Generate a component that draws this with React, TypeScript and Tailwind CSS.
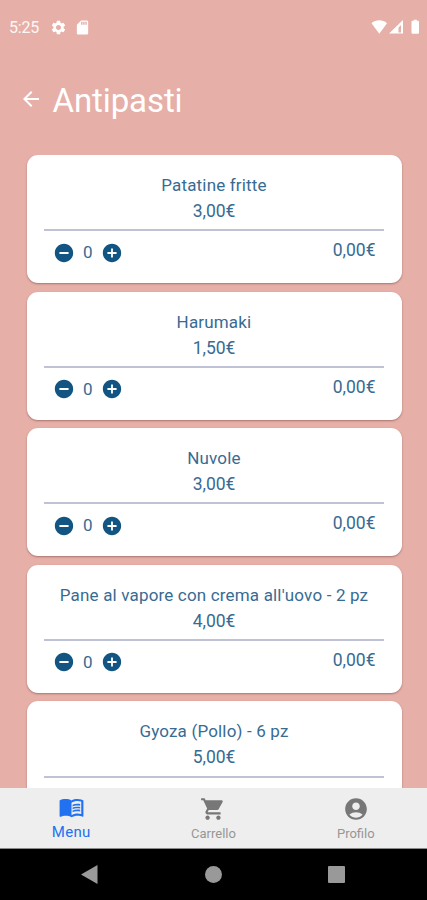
import {
  MdAccountCircle,
  MdAddCircle,
  MdArrowBack,
  MdMenuBook,
  MdRemoveCircle,
  MdSdCard,
  MdSettings,
  MdShoppingCart,
} from "react-icons/md";

interface Dish {
  name: string;
  price: string;
}

const dishes: Dish[] = [
  { name: "Patatine fritte", price: "3,00€" },
  { name: "Harumaki", price: "1,50€" },
  { name: "Nuvole", price: "3,00€" },
  { name: "Pane al vapore con crema all'uovo - 2 pz", price: "4,00€" },
  { name: "Gyoza (Pollo) - 6 pz", price: "5,00€" },
];

const StatusBar = () => {
  return (
    <div className="flex h-[54px] shrink-0 items-center justify-between pr-[7px] pl-[9px] text-white">
      <div className="flex items-center">
        <span className="w-[30px] pt-[2px] text-[16px] tracking-[-0.2px] text-white/90">
          5:25
        </span>
        <MdSettings size={17} className="ml-[11px]" />
        <MdSdCard size={17} className="ml-[7px]" />
      </div>
      <svg width="50" height="16" viewBox="0 0 50 16" fill="currentColor">
        <path d="M1.5 4.2C6 .4 12.5 .4 17 4.2L9.3 14.8z" />
        <path
          d="M19 14.5L33 1v13.5zM28.5 13.5h2.5V6L28.5 8.5z"
          fillRule="evenodd"
        />
        <path d="M42.5 1.8h1.2V.8h3.2v1h1.1q1 0 1 1v10.9q0 1-1 1h-5.5q-1 0-1-1V2.8q0-1 1-1z" />
      </svg>
    </div>
  );
};

const DishCard = ({ name, price }: Dish) => {
  return (
    <div className="h-[128.3px] shrink-0 rounded-[11px] bg-white px-[17.5px] pt-[17px] text-[17px] text-[#386b92] shadow-[0_1px_2px_rgba(90,50,45,0.45)]">
      <div className="text-center leading-[26px]">
        <div className="tracking-[0.17px] whitespace-nowrap">{name}</div>
        <div className="text-[17.5px] tracking-[-0.1px]">{price}</div>
      </div>
      <div className="mt-[5.2px] h-[2px] bg-[#bfc2d5]" />
      <div className="flex justify-between pr-[8.5px] pl-[9px]">
        <div className="flex h-[43px] items-center">
          <MdRemoveCircle size={22} className="-mx-[0.5px] text-[#125582]" />
          <span className="w-[27.5px] text-center">0</span>
          <MdAddCircle size={22} className="-mx-[0.5px] text-[#125582]" />
        </div>
        <span className="pt-[6px] text-[17.5px] leading-[26px]">0,00€</span>
      </div>
    </div>
  );
};

const TabBar = () => {
  return (
    <div className="grid h-[61px] shrink-0 grid-cols-3 border-b border-[#8a8a8a] bg-[#eeeeee] pt-[7px] text-[13px] text-[#969696]">
      <div className="flex flex-col items-center text-[#2271f0]">
        <MdMenuBook size={26} className="translate-x-[0.5px] -translate-y-px" />
        <span className="text-[15px] leading-[22px] tracking-[0.3px]">
          Menu
        </span>
      </div>
      <div className="flex flex-col items-center">
        <MdShoppingCart size={26} className="translate-y-px text-[#777777]" />
        <span className="leading-[25px]">Carrello</span>
      </div>
      <div className="flex flex-col items-center">
        <MdAccountCircle size={26} className="translate-y-px text-[#777777]" />
        <span className="leading-[25px]">Profilo</span>
      </div>
    </div>
  );
};

const SystemNav = () => {
  return (
    <div className="flex h-[51px] shrink-0 items-center justify-between bg-black pr-[82px] pl-[81px]">
      <svg width="17" height="19" viewBox="0 0 17 19" fill="#999999">
        <path d="M0 9.5L16.5 0v19z" />
      </svg>
      <div className="size-[17px] rounded-full bg-[#999999]" />
      <div className="size-[17px] rounded-[1px] bg-[#999999]" />
    </div>
  );
};

const App = () => {
  return (
    <div className="flex h-[900px] w-[427px] flex-col overflow-hidden bg-[#e6afa7] font-[Roboto,sans-serif]">
      <StatusBar />
      <header className="flex h-[101px] shrink-0 items-start pt-[27px] pl-[19px] text-white">
        <MdArrowBack size={24} className="mt-[5.5px]" />
        <h1 className="ml-[9.5px] text-[33px] leading-[40px] tracking-[-0.1px]">
          Antipasti
        </h1>
      </header>
      <main className="flex min-h-0 flex-1 flex-col gap-[8.3px] overflow-hidden pr-[25.5px] pl-[26.5px]">
        {dishes.map((dish) => (
          <DishCard key={dish.name} {...dish} />
        ))}
      </main>
      <TabBar />
      <SystemNav />
    </div>
  );
};

export default App;
